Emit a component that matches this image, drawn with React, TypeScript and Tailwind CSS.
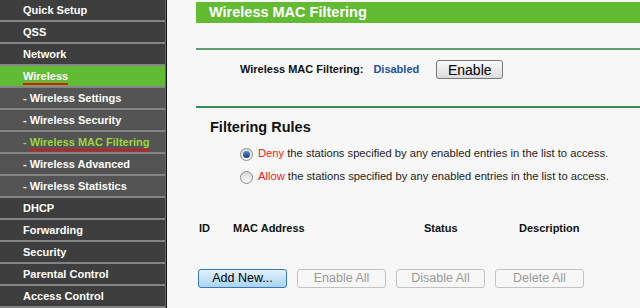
const MENU: { label: string; sub?: boolean; active?: boolean; current?: boolean }[] = [
  { label: "Quick Setup" },
  { label: "QSS" },
  { label: "Network" },
  { label: "Wireless", active: true },
  { label: "- Wireless Settings", sub: true },
  { label: "- Wireless Security", sub: true },
  { label: "- Wireless MAC Filtering", sub: true, current: true },
  { label: "- Wireless Advanced", sub: true },
  { label: "- Wireless Statistics", sub: true },
  { label: "DHCP" },
  { label: "Forwarding" },
  { label: "Security" },
  { label: "Parental Control" },
  { label: "Access Control" },
];

function Sidebar() {
  return (
    <div className="w-[166px] shrink-0 border-r border-[#6a6a6a]">
      {MENU.map((item) => {
        let bg = "bg-[#3e3e3e]";
        if (item.sub) bg = "bg-[#545454]";
        if (item.active) bg = "bg-[#62bb35]";
        return (
          <div
            key={item.label}
            className={`h-[22px] border-b-2 border-[#858585] flex items-center pl-[23px] ${bg}`}
          >
            <span
              className={`text-[11px] font-bold leading-none ${
                item.current ? "text-[#9bd63e]" : "text-white"
              }`}
            >
              {item.current ? (
                <>
                  -{" "}
                  <span className="border-b-2 border-[#e0121b] pb-[1px]">Wireless MAC Filtering</span>
                </>
              ) : item.active ? (
                <span className="border-b-2 border-[#e0121b] pb-[1px]">{item.label}</span>
              ) : (
                item.label
              )}
            </span>
          </div>
        );
      })}
    </div>
  );
}

function Radio({ checked }: { checked?: boolean }) {
  return (
    <span className="w-[13px] h-[13px] rounded-full border border-[#8b8b8b] bg-gradient-to-b from-[#d9d9d9] to-[#fafafa] flex items-center justify-center shrink-0">
      {checked && (
        <span className="w-[7px] h-[7px] rounded-full bg-gradient-to-b from-[#5a8fd6] to-[#133d7e]" />
      )}
    </span>
  );
}

function Btn({ label, primary }: { label: string; primary?: boolean }) {
  return (
    <button
      className={`w-[89px] h-[19px] rounded-[3px] border text-[12.5px] leading-none ${
        primary
          ? "border-[#3a77b8] bg-gradient-to-b from-[#e3f1fb] to-[#a9d4f3] text-black"
          : "border-[#c2c2c2] bg-[#f7f7f7] text-[#9a9a9a]"
      }`}
    >
      {label}
    </button>
  );
}

export default function App() {
  return (
    <div
      className="w-[640px] h-[308px] flex overflow-hidden bg-[#f7f7f7]"
      style={{ fontFamily: '"Liberation Sans", Arial, sans-serif' }}
    >
      <Sidebar />
      <div className="w-px bg-[#111] shrink-0" />
      <div className="flex-1 pl-[29px] pt-[2px]">
        <div className="h-[21px] bg-[#62bb33] flex items-center pl-[13px]">
          <span className="text-white font-bold text-[14.5px]">Wireless MAC Filtering</span>
        </div>
        <div className="h-[2px] bg-[#5e9e72] mt-[25px]" />
        <div className="flex items-center h-[35px] mt-[2px] pl-[44px]">
          <span className="text-[11px] font-bold text-[#111]">Wireless MAC Filtering:</span>
          <span className="text-[11px] font-bold text-[#1f4f9e] ml-[10px]">Disabled</span>
          <button className="ml-[17px] w-[67px] h-[19px] rounded-[3px] border border-[#777] bg-gradient-to-b from-[#fafafa] to-[#dcdcdc] text-[14px] leading-none text-black">
            Enable
          </button>
        </div>
        <div className="h-[2px] bg-[#2f8f4e] mt-[19px]" />
        <div className="pl-[14px] pt-[12px] text-[14.5px] font-bold text-[#111] leading-none">
          Filtering Rules
        </div>
        <div className="pl-[44px] mt-[13px] flex flex-col gap-[10px] text-[11.2px] text-[#222] leading-none">
          <div className="h-[13px] flex items-center gap-[5px]">
            <Radio checked />
            <span>
              <span className="text-[#ee1c25]">Deny</span> the stations specified by any enabled entries in the list to access.
            </span>
          </div>
          <div className="h-[13px] flex items-center gap-[5px]">
            <Radio />
            <span>
              <span className="text-[#ee1c25]">Allow</span> the stations specified by any enabled entries in the list to access.
            </span>
          </div>
        </div>
        <div className="flex text-[11px] font-bold text-[#111] leading-none mt-[39px] pl-[3px]">
          <span className="w-[34px]">ID</span>
          <span className="w-[191px]">MAC Address</span>
          <span className="w-[95px]">Status</span>
          <span>Description</span>
        </div>
        <div className="flex gap-[10px] mt-[35px] pl-[2px]">
          <Btn label="Add New..." primary />
          <Btn label="Enable All" />
          <Btn label="Disable All" />
          <Btn label="Delete All" />
        </div>
      </div>
    </div>
  );
}
